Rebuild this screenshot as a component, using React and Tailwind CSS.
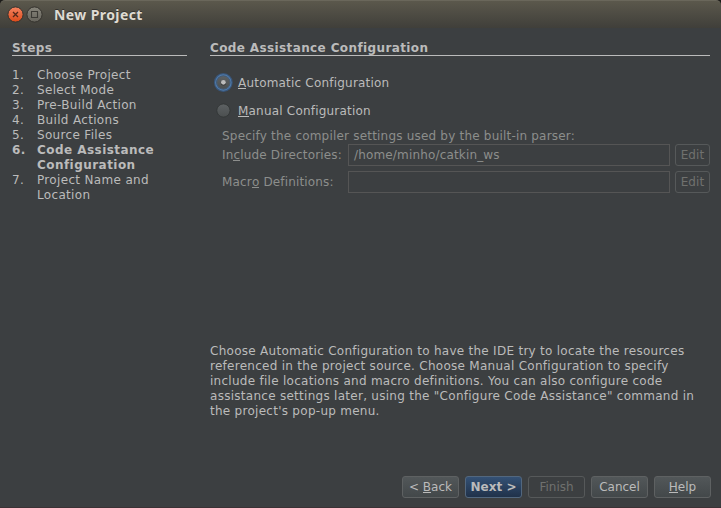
import React from "react";

const steps = [
  { n: "1.", lines: ["Choose Project"] },
  { n: "2.", lines: ["Select Mode"] },
  { n: "3.", lines: ["Pre-Build Action"] },
  { n: "4.", lines: ["Build Actions"] },
  { n: "5.", lines: ["Source Files"] },
  { n: "6.", lines: ["Code Assistance", "Configuration"], current: true },
  { n: "7.", lines: ["Project Name and", "Location"] },
];

const description = [
  "Choose Automatic Configuration to have the IDE try to locate the resources",
  "referenced in the project source. Choose Manual Configuration to specify",
  "include file locations and macro definitions. You can also configure code",
  "assistance settings later, using the \"Configure Code Assistance\" command in",
  "the project's pop-up menu.",
];

// Underlined mnemonic letter
function Key({ children }) {
  return <span className="inline-block h-[13px] border-b border-current leading-[15px]">{children}</span>;
}

function TitleBar() {
  return (
    <header className="flex h-7 items-center rounded-t-[5px] border-t border-[#6a675b] bg-gradient-to-b from-[#5b584c] to-[#403f3a] pl-[7px]">
      <svg width="36" height="18" viewBox="0 0 36 18" className="mt-px">
        <defs>
          <linearGradient id="close" x2="0" y2="1">
            <stop offset="0" stopColor="#f58461" />
            <stop offset="1" stopColor="#dc4a19" />
          </linearGradient>
          <linearGradient id="max" x2="0" y2="1">
            <stop offset="0" stopColor="#87857b" />
            <stop offset="1" stopColor="#65635b" />
          </linearGradient>
        </defs>
        <circle cx="8.5" cy="8.5" r="7.6" fill="url(#close)" stroke="#35332e" />
        <path d="M6 6l5 5M11 6l-5 5" stroke="#53281a" strokeWidth="1.3" />
        <circle cx="27.5" cy="8.5" r="7.6" fill="url(#max)" stroke="#35332e" />
        <path d="M24.5 5.5h6v6h-6z" fill="none" stroke="#3b3a35" strokeWidth="1.1" />
      </svg>
      <h1 className="ml-[11px] font-['Noto_Sans',sans-serif] text-[14px] leading-7 font-bold tracking-[0.4px] text-[#dfdbd2] [text-shadow:0_-1px_0_#33322e]">
        New Project
      </h1>
    </header>
  );
}

function Heading({ children }) {
  return (
    <h2 className="h-[16px] border-b border-[#bbbbbb] pt-px leading-[15px] font-bold tracking-[0.38px]">{children}</h2>
  );
}

function Radio({ checked }) {
  return (
    <svg width="22" height="22" viewBox="0 0 22 22" className="shrink-0">
      <defs>
        <linearGradient id="radio" x2="0" y2="1">
          <stop offset="0" stopColor="#5d6163" />
          <stop offset="1" stopColor="#4b4f50" />
        </linearGradient>
      </defs>
      {checked && <circle cx="11.3" cy="11.5" r="8.1" fill="none" stroke="#39567a" strokeWidth="2.6" />}
      {checked && <circle cx="11.3" cy="11.5" r="7.7" fill="none" stroke="#507aa8" strokeWidth="1.2" />}
      <circle cx="11.4" cy="11.5" r="6.6" fill="url(#radio)" stroke={checked ? "#47617c" : "#303334"} strokeWidth="0.8" />
      {checked && <circle cx="11.4" cy="12.1" r="2.5" fill="#303233" />}
      {checked && <circle cx="11.4" cy="11.3" r="2.4" fill="#bcbcbc" />}
    </svg>
  );
}

function Field({ label, value }) {
  return (
    <div className="flex h-[22px] items-center text-[#8c8e8c]">
      <label className="w-[126px] leading-[20px]">{label}</label>
      <div className="h-full w-[322px] border border-[#555555] pl-[5px] leading-[20px]">{value}</div>
      <button className="ml-[5px] h-full w-[35px] rounded-[3px] border border-[#56595a] leading-[20px] tracking-[0.1px] text-[#70716f]">Edit</button>
    </div>
  );
}

function Button({ children, className }) {
  return (
    <button className={`h-[22px] w-[57px] rounded-[3px] border leading-[20px] whitespace-nowrap ${className}`}>
      {children}
    </button>
  );
}

export default function App() {
  const normal = "border-[#5e6162] bg-gradient-to-b from-[#525759] to-[#43484a]";
  return (
    <div className="h-[508px] w-[721px] bg-[#1c1b19] font-['DejaVu_Sans',sans-serif] text-[12px] leading-[15px] text-[#bbbbbb]">
      <TitleBar />
      <div className="flex h-[480px] flex-col border-b border-[#3b3235] bg-[#3c3f41]">
        <main className="flex h-[448px] pt-[12px] pl-[12px]">
          <aside className="w-[175px]">
            <Heading>Steps</Heading>
            <ol className="mt-[12px]">
              {steps.map((s) => (
                <li key={s.n} className={`flex whitespace-nowrap ${s.current ? "font-bold tracking-[0.45px]" : "tracking-[0.33px]"}`}>
                  <span className="w-[25px]">{s.n}</span>
                  <span>{s.lines.map((l) => <span key={l} className="block">{l}</span>)}</span>
                </li>
              ))}
            </ol>
          </aside>
          <section className="ml-[23px] flex w-[500px] flex-col whitespace-nowrap">
            <Heading>Code Assistance Configuration</Heading>
            <div className="mt-[15px] flex h-[22px] items-center pl-[2px]">
              <Radio checked />
              <span className="mt-[2px] ml-[4px] tracking-[0.2px]"><Key>A</Key>utomatic Configuration</span>
            </div>
            <div className="mt-[6px] flex h-[22px] items-center pl-[2px]">
              <Radio />
              <span className="mt-[2px] ml-[4px] tracking-[0.2px]"><Key>M</Key>anual Configuration</span>
            </div>
            <div className="mt-[7px] pl-[12px] tracking-[0.16px]">
              <p className="h-[16px] pt-px tracking-[0.2px] text-[#8c8e8c]">Specify the compiler settings used by the built-in parser:</p>
              <Field label={<>In<Key>c</Key>lude Directories:</>} value="/home/minho/catkin_ws" />
              <div className="h-[5px]" />
              <Field label={<>Macr<Key>o</Key> Definitions:</>} />
            </div>
            <div className="mt-[151px] tracking-[0.275px]">
              {description.map((l) => <p key={l}>{l}</p>)}
            </div>
          </section>
        </main>
        <footer className="flex gap-[6px] pl-[402px]">
          <Button className={normal}>&lt; <Key>B</Key>ack</Button>
          <Button className="border-[#52677e] bg-gradient-to-b from-[#345175] to-[#20324a] font-bold">Next &gt;</Button>
          <Button className="border-[#56595a] text-[#70716f]">Finish</Button>
          <Button className={normal}>Cancel</Button>
          <Button className={normal}><Key>H</Key>elp</Button>
        </footer>
      </div>
    </div>
  );
}
